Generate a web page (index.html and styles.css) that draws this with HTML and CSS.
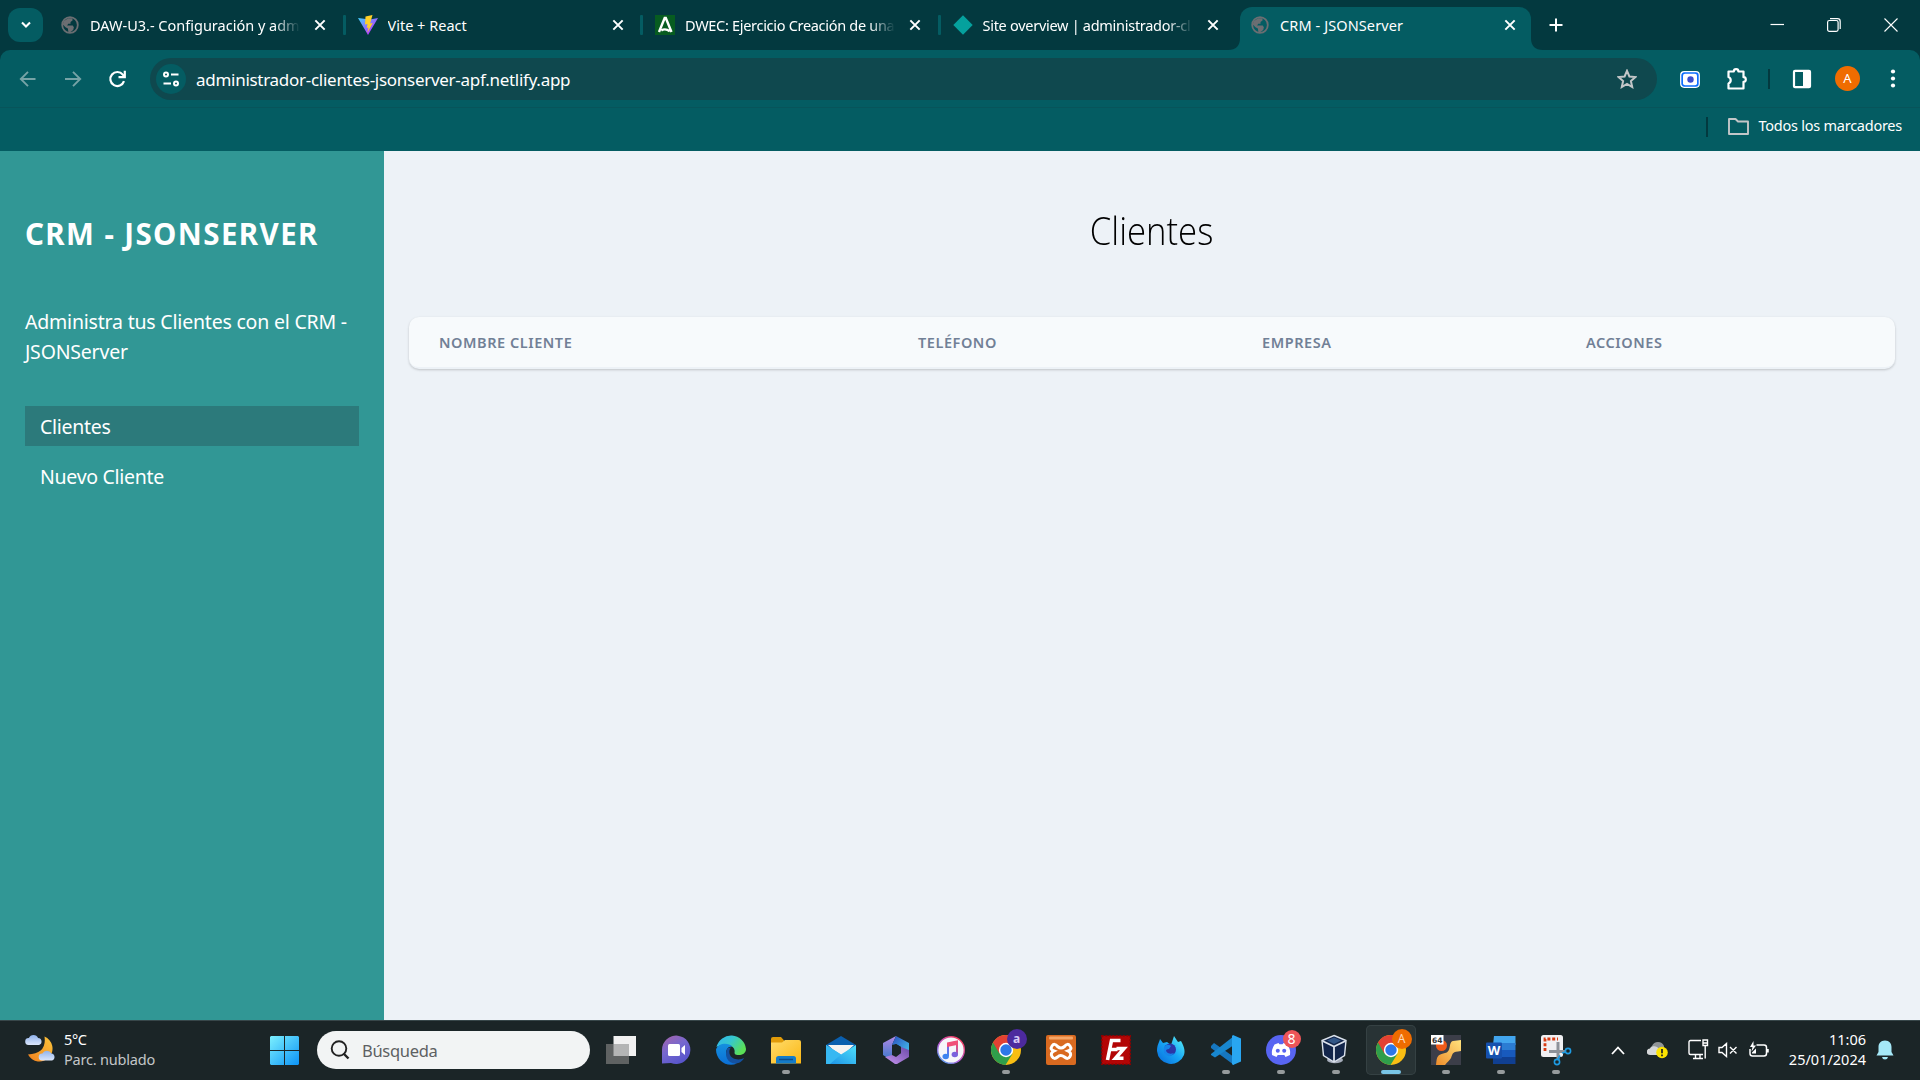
FILE: index.html
```html
<!DOCTYPE html>
<html lang="es">
<head>
<meta charset="utf-8">
<title>CRM - JSONServer</title>
<link rel="stylesheet" href="styles.css">
</head>
<body>
<svg width="0" height="0" class="defs">
  <defs>
    <linearGradient id="gWin" x1="0" y1="0" x2="1" y2="1"><stop offset="0" stop-color="#7cf0fe"/><stop offset="1" stop-color="#0c93f6"/></linearGradient>
    <linearGradient id="gVite" x1="0" y1="0" x2="1" y2="1"><stop offset="0" stop-color="#41d1ff"/><stop offset=".8" stop-color="#bd34fe"/></linearGradient>
    <linearGradient id="gMoon" x1="1" y1="0" x2="0" y2="1"><stop offset="0" stop-color="#fbc53b"/><stop offset="1" stop-color="#f0801f"/></linearGradient>
    <linearGradient id="gCloud" x1="0" y1="0" x2="0" y2="1"><stop offset="0" stop-color="#8fb2ec"/><stop offset="1" stop-color="#dbe6fb"/></linearGradient>
    <linearGradient id="gTeams" x1="0" y1="0" x2=".6" y2="1"><stop offset="0" stop-color="#a863a8"/><stop offset=".5" stop-color="#7668cf"/><stop offset="1" stop-color="#5855cc"/></linearGradient>
    <linearGradient id="gEdge" x1="0" y1="0" x2="1" y2=".5"><stop offset="0" stop-color="#2fb5ee"/><stop offset=".5" stop-color="#36c7cf"/><stop offset="1" stop-color="#5be057"/></linearGradient>
    <linearGradient id="gEdge2" x1="0" y1="0" x2="0" y2="1"><stop offset="0" stop-color="#1590df"/><stop offset="1" stop-color="#0b6fd6"/></linearGradient>
    <linearGradient id="gFolder" x1="0" y1="0" x2="1" y2="1"><stop offset="0" stop-color="#ffdc6b"/><stop offset="1" stop-color="#fbb714"/></linearGradient>
    <linearGradient id="gMail" x1="1" y1="0" x2="0" y2="1"><stop offset="0" stop-color="#4fe0fb"/><stop offset="1" stop-color="#1b8fe4"/></linearGradient>
    <linearGradient id="gM1" x1="0" y1="0" x2="0" y2="1"><stop offset="0" stop-color="#b489e6"/><stop offset="1" stop-color="#3d78cc"/></linearGradient>
    <linearGradient id="gM2" x1="0" y1="0" x2="1" y2="1"><stop offset="0" stop-color="#2b4ec0"/><stop offset="1" stop-color="#46c9ee"/></linearGradient>
    <linearGradient id="gM3" x1="0" y1="1" x2="1" y2="0"><stop offset="0" stop-color="#c795ef"/><stop offset="1" stop-color="#6c4aa9"/></linearGradient>
    <linearGradient id="gNote" x1="0" y1="1" x2="1" y2="0"><stop offset="0" stop-color="#3f86f2"/><stop offset=".4" stop-color="#8662dc"/><stop offset="1" stop-color="#fb4a67"/></linearGradient>
    <linearGradient id="gRing" x1="0" y1="1" x2=".8" y2="0"><stop offset="0" stop-color="#42b8f8"/><stop offset=".45" stop-color="#b35bd8"/><stop offset="1" stop-color="#fb3c58"/></linearGradient>
    <linearGradient id="gFox" x1="1" y1="0" x2="0" y2="1"><stop offset="0" stop-color="#5ff4f5"/><stop offset=".5" stop-color="#17a5f5"/><stop offset="1" stop-color="#0867d8"/></linearGradient>
    <linearGradient id="gXyz" x1="1" y1="0" x2="0" y2="1"><stop offset="0" stop-color="#ffe37e"/><stop offset="1" stop-color="#ee8c2a"/></linearGradient>
    <symbol id="globe" viewBox="0 0 18 18"><circle cx="9" cy="9" r="7.800" fill="none" stroke="#6b6e72" stroke-width="1.800"/><path d="M3 5l4-2.800h4.500v2.300L9.500 6v1.700H7.200L6.200 9.500h5.500l1.200 1.800-.7 2.600-3.400 2.700-1.500-.8-.4-3.300-2.400-1.300L1.600 8.200z" fill="#6b6e72"/></symbol>
    <symbol id="x" viewBox="0 0 12 12"><path d="M2 2l8 8M10 2l-8 8" stroke="#fff" stroke-width="1.700" fill="none"/></symbol>
    <symbol id="chrome" viewBox="0 0 30 30"><circle cx="15" cy="15" r="15" fill="#f9be13"/><path d="M15 15L2 7.500A15 15 0 0 0 14.500 30L21.500 18.700z" fill="#2f9e4b"/><path d="M15 15v-7h13.200A15 15 0 0 0 2 7.500l6.400 11z" fill="#e34133"/><circle cx="15" cy="15" r="7.200" fill="#fff"/><circle cx="15" cy="15" r="5.700" fill="#2d77e8"/></symbol>
  </defs>
</svg>

<header class="tabstrip">
  <button class="tab-search"><svg width="14" height="10" viewBox="0 0 14 10"><path d="M3 2.500l4 4 4-4" fill="none" stroke="#fff" stroke-width="2.100"/></svg></button>
  <nav class="tabs">
    <div class="tab"><svg class="fav" viewBox="0 0 18 18"><use href="#globe"/></svg><span class="tab-title t1">DAW-U3.- Configuración y adm</span><svg class="tab-x"><use href="#x"/></svg></div>
    <div class="tab"><svg class="fav" viewBox="0 0 20 20"><path d="M0 3l10 17L20 3l-8 1.500z" fill="url(#gVite)"/><path d="M14.500 0L7.500 1.400l-.5 8 2.500-.5-.7 4 1.700-.5-1.200 5.600 5.400-10-2.600.5z" fill="#ffd028"/></svg><span class="tab-title t2">Vite + React</span><svg class="tab-x"><use href="#x"/></svg></div>
    <div class="tab"><svg class="fav" viewBox="0 0 20 20"><path d="M0 0h20v20H0z" fill="#075c20"/><path d="M4 17L9.700 3h1.100L16.500 17M6.300 15.500q4-2.600 8.500.8" fill="none" stroke="#fff" stroke-width="2.400"/></svg><span class="tab-title t3">DWEC: Ejercicio Creación de una</span><svg class="tab-x"><use href="#x"/></svg></div>
    <div class="tab"><svg class="fav" viewBox="0 0 20 20"><path d="M10 .3l9.700 9.700L10 19.700.3 10z" fill="#05a19d"/></svg><span class="tab-title t4">Site overview | administrador-cl</span><svg class="tab-x"><use href="#x"/></svg></div>
    <div class="tab active"><svg class="fav" viewBox="0 0 18 18"><use href="#globe"/></svg><span class="tab-title t5">CRM - JSONServer</span><svg class="tab-x"><use href="#x"/></svg><svg class="flare left" viewBox="0 0 12 12"><path d="M12 0v12H0Q12 12 12 0z" fill="#045c62"/></svg><svg class="flare right" viewBox="0 0 12 12"><path d="M0 0v12h12Q0 12 0 0z" fill="#045c62"/></svg></div>
  </nav>
  <svg class="new-tab" viewBox="0 0 14 14"><path d="M7 .5v13M.5 7h13" stroke="#fff" stroke-width="2"/></svg>
  <div class="win-controls">
    <svg viewBox="0 0 14 14"><path d="M.5 6.500h13.500" stroke="#fff" stroke-width="1.200"/></svg>
    <svg viewBox="0 0 14 14"><rect x=".6" y="2.500" width="10.500" height="10.800" rx="1.800" fill="none" stroke="#fff" stroke-width="1.200"/><path d="M3 .7h7.500q2.700 0 2.700 2.700V11" fill="none" stroke="#fff" stroke-width="1.200"/></svg>
    <svg viewBox="0 0 14 14"><path d="M.5 .5l13 13M13.500 .5l-13 13" stroke="#fff" stroke-width="1.100"/></svg>
  </div>
</header>

<section class="toolbar-wrap"><div class="toolbar">
  <div class="nav-icons">
    <svg viewBox="0 0 20 20"><path d="M17.500 10H3M10 2.800L2.800 10l7.200 7.200" fill="none" stroke="#76a3a6" stroke-width="1.900"/></svg>
    <svg viewBox="0 0 20 20"><path d="M2 10h15M10 2.800l7.200 7.200-7.200 7.200" fill="none" stroke="#76a3a6" stroke-width="1.900"/></svg>
    <svg viewBox="0 0 20 20"><path d="M16 12.200A7 7 0 1 1 14.800 5.600L16.300 7.500" fill="none" stroke="#fff" stroke-width="2.200"/><path d="M16.800 1.800V8.200H10.500" fill="none" stroke="#fff" stroke-width="2.200"/></svg>
  </div>
  <div class="omnibox">
    <div class="site-chip"><svg width="16" height="16" viewBox="0 0 16 16" fill="none" stroke="#fff" stroke-width="2"><circle cx="3" cy="3.500" r="2"/><path d="M8 3.500h7.500M.5 12.500H8"/><circle cx="13" cy="12.500" r="2"/></svg></div>
    <span class="url">administrador-clientes-jsonserver-apf.netlify.app</span>
    <svg class="star" viewBox="0 0 20 20"><path d="M10 1.800l2.400 5.700 6 .5-4.500 4 1.300 6L10 14.900 4.800 18l1.300-6-4.500-4 6-.5z" fill="none" stroke="#c3c6c8" stroke-width="2"/></svg>
  </div>
  <div class="actions">
    <svg class="a1" width="20" height="17" viewBox="0 0 20 17"><rect x=".7" y=".7" width="18.600" height="15.600" rx="3.500" fill="#0d6efd" stroke="#fff" stroke-width="1.200"/><rect x="3" y="2.800" width="14" height="11.400" rx="2" fill="#fff"/><circle cx="10.500" cy="8.500" r="3.200" fill="#3b4ccc"/></svg>
    <svg class="a2" width="22" height="22" viewBox="0 0 22 22"><path d="M2.500 3.500h5.300a2.300 2.300 0 0 1 4.600 0H17.500v5.700a2.300 2.300 0 0 1 0 4.600V20.500H2.500v-5a3.500 3.500 0 0 0 0-6.500V3.500z" fill="none" stroke="#fff" stroke-width="2.200" stroke-linejoin="round"/></svg>
    <i class="divider"></i>
    <svg class="a3" width="20" height="20" viewBox="0 0 20 20"><rect x="2" y="1.800" width="16" height="16.400" rx="1" fill="none" stroke="#fff" stroke-width="2.200"/><path d="M11 2h7v16h-7z" fill="#fff"/></svg>
    <span class="avatar">A</span>
    <svg class="a4" width="6" height="20" viewBox="0 0 6 20" fill="#fff"><circle cx="3" cy="2.500" r="2.100"/><circle cx="3" cy="9.500" r="2.100"/><circle cx="3" cy="16.500" r="2.100"/></svg>
  </div>
</div></section>
<section class="bookmarks">
  <i class="divider"></i>
  <svg width="21" height="17" viewBox="0 0 21 17"><path d="M1 1h6.500l2.500 2.500h10V16H1z" fill="none" stroke="#c3c6c8" stroke-width="1.900" stroke-linejoin="round"/></svg>
  <span>Todos los marcadores</span>
</section>

<div class="page">
  <aside class="sidebar">
    <h2>CRM - JSONServer</h2>
    <p>Administra tus Clientes con el CRM -<br>JSONServer</p>
    <nav><a class="current">Clientes</a><a>Nuevo Cliente</a></nav>
  </aside>
  <main class="content">
    <h1><span>Clientes</span></h1>
    <div class="table">
      <div class="thead"><div>Nombre Cliente</div><div>Teléfono</div><div>Empresa</div><div>Acciones</div></div>
    </div>
  </main>
</div>

<footer class="taskbar">
  <div class="weather">
    <svg width="31" height="29" viewBox="0 0 31 29"><path d="M19.500 2.500A13 13 0 1 1 3 20.500Q22 19.500 19.500 2.500z" fill="url(#gMoon)"/><path d="M3.500 11a3.500 3.500 0 0 1 .4-7 5 5 0 0 1 9.200 0 3.600 3.600 0 0 1 1 7z" fill="url(#gCloud)"/><path d="M17 26.500a3.500 3.500 0 0 1 .4-7 5 5 0 0 1 9 0 3.600 3.600 0 0 1 .6 7z" fill="url(#gCloud)"/></svg>
    <div class="weather-text"><b>5°C</b><small>Parc. nublado</small></div>
  </div>
  <svg class="start" viewBox="0 0 29 29" fill="url(#gWin)"><path d="M1 0h13v14H0V1zM15 0h13l1 1v13H15zM0 15h14v14H1l-1-1zM15 15h14v13l-1 1H15z"/></svg>
  <div class="search"><svg width="20" height="20" viewBox="0 0 20 20" fill="none" stroke="#222" stroke-width="1.900"><circle cx="9" cy="8.500" r="7.300"/><path d="M13.500 13.500l5 5" stroke-width="2.400"/></svg><span>Búsqueda</span></div>
  <div class="apps">
    <div class="app"><svg viewBox="0 0 30 30"><path d="M7.500 1h22.500v20H7.500z" fill="#f1f1f1"/><path d="M0 9h23v20H0z" fill="#5f6262"/><path d="M7.500 9H23v12H7.500z" fill="#b4b5b5"/></svg></div>
    <div class="app"><svg viewBox="0 0 30 30"><path d="M1 28.500V15A14.200 14.200 0 1 1 10 28z" fill="url(#gTeams)"/><rect x="7" y="9" width="12" height="12" rx="1.500" fill="#fff"/><path d="M20.500 13l3.500-3v10l-3.500-3z" fill="#fff"/></svg></div>
    <div class="app"><svg viewBox="0 0 30 30"><path d="M.5 12A15 15 0 0 1 30 14C30 19 25 20.500 21.500 20 18 19.500 18.500 17.500 18.700 16Q18 11 13 10.500 5 9 .5 12z" fill="url(#gEdge)"/><path d="M0 14.500C2 8 12 7 16.500 11.500 11 11 9 16 11 21c2 4.500 6 7 10 7.500-10 4.500-21-3-21-14z" fill="url(#gEdge2)"/><path d="M11.500 13c-4 8 .5 15.500 8 15.500 4 0 7.500-3 8.500-5.500-4 2.500-13 2-14.500-4.500-.5-2.500 0-4.500 1.500-6z" fill="#1451a0"/></svg></div>
    <div class="app run"><svg viewBox="0 0 30 30"><path d="M0 4q0-2 2-2h8l3.500 4v4H0z" fill="#e09b09"/><path d="M0 7.500h11l3-2.500h14q2 0 2 2v21.500H0z" fill="url(#gFolder)"/><path d="M5 28.500v-5q0-2.500 2.500-2.500h15q2.500 0 2.500 2.500v5z" fill="#147cc9"/><path d="M8 24.500h14" stroke="#0c4d8c" stroke-width="1.500"/></svg></div>
    <div class="app"><svg viewBox="0 0 30 30"><path d="M0 10L15 1l15 9v5H0z" fill="#0a5fae"/><path d="M2 10h26L15 22z" fill="#f5f3f1"/><path d="M0 10l15 9.500L30 10v19H0z" fill="url(#gMail)"/><path d="M0 10l15 9.500L4 29H0z" fill="#37b8f2"/></svg></div>
    <div class="app"><svg viewBox="0 0 30 30"><path d="M15 1l-4 9v10l-2 4.500L2 20V8z" fill="url(#gM1)"/><path d="M11 10l4-9 13 7v13l-8-3.500V12l-5-3z" fill="url(#gM2)"/><path d="M28 15v7l-12 7H14L4 22l7-2 4 2 5-4V12z" fill="url(#gM3)"/><path d="M15 9l5 3v6l-5 3-4-2v-7z" fill="#1b2527"/></svg></div>
    <div class="app"><svg viewBox="0 0 30 30"><circle cx="15" cy="15" r="13.300" fill="#f6f6fa" stroke="url(#gRing)" stroke-width="1.400"/><path d="M12 21V9l9-2v12" fill="none" stroke="url(#gNote)" stroke-width="2"/><path d="M11 7.500l11-2.300v4.500L11 12z" fill="#f04f78"/><ellipse cx="9.700" cy="21.500" rx="3.200" ry="2.800" fill="#3e84f0"/><ellipse cx="18.800" cy="19.500" rx="3.200" ry="2.800" fill="#7a61dd"/></svg></div>
    <div class="app run"><svg viewBox="0 0 30 30"><use href="#chrome"/></svg><em class="badge purple">a</em></div>
    <div class="app"><svg viewBox="0 0 30 30"><rect width="30" height="30" rx="2" fill="#d96a20"/><rect x="3" y="1.500" width="24" height="3" rx="1" fill="#f5a567"/><path d="M11.500 11.500q-3-4-5.500-.5t2 5q-4 2-2 5.500t5.500.5q3-3 7 0 3.500 3 5.500-.5t-2-5.500q4.500-1.500 2-5t-5.500.5q-3.500 3-7 0z" fill="none" stroke="#fff" stroke-width="3"/></svg></div>
    <div class="app"><svg viewBox="0 0 30 30"><rect x=".8" y=".8" width="28.400" height="28.400" fill="#b30505" stroke="#8e0000" stroke-width="1.500" stroke-dasharray="2 1.500"/><path d="M6.500 25l4-19.500h9M8.500 14.500h8M15.500 13.500h7.500l-8.500 9.800h8" fill="none" stroke="#fff" stroke-width="3.600"/></svg></div>
    <div class="app"><svg viewBox="0 0 30 30"><path d="M1 16C1 10 3 8 4 4l3 4 4-1 4 3 3-9 4 6 3-1c4 7 4 11 3 14A14 14 0 0 1 1 16z" fill="url(#gFox)"/><circle cx="14" cy="14.500" r="6" fill="#2c35a5"/><path d="M8 12q3-4 7-1l-2 3q-3 0-3 2 2 4 8 2-3 5-8 2-3-2-2-8z" fill="#1784ea"/></svg></div>
    <div class="app run"><svg viewBox="0 0 30 30"><path d="M0 11l3-3 20 14v8L0 13z" fill="#1677c0"/><path d="M0 19L23 1v9L4 22.500 0 20z" fill="#1887cf"/><path d="M22 0l8 3.500v23L22 30l-1-1V1z" fill="#29a6f1"/></svg></div>
    <div class="app run"><svg viewBox="0 0 30 30"><circle cx="15" cy="15" r="15" fill="#5865f2"/><path d="M8.500 9.500l4-1.500 1 1.200h3l1-1.200 4 1.500Q25 15 24 20l-4.500 2-1.200-2h-6.600l-1.200 2L6 20q-1-5 2.500-10.500z" fill="#fff"/><circle cx="11.800" cy="15.800" r="2" fill="#5865f2"/><circle cx="18.200" cy="15.800" r="2" fill="#5865f2"/></svg><em class="badge red">8</em></div>
    <div class="app run"><svg viewBox="2 0 30 30"><ellipse cx="16" cy="25" rx="8" ry="3.300" fill="#a6adbb"/><path d="M15 .5l12 5-1.500 15L15 27 4.500 20.500 3 5.500z" fill="#12254a" stroke="#dbe2ec" stroke-width="1.400"/><path d="M3.500 6L15 11.500 26.500 6M15 11.500V27" stroke="#dbe2ec" stroke-width="1.800" fill="none"/><path d="M8 5.500l7-3 7 3-7 3.500z" fill="#315687"/></svg></div>
    <div class="app run focused"><svg viewBox="0 0 30 30"><use href="#chrome"/></svg><em class="badge orange">A</em></div>
    <div class="app run"><svg viewBox="0 0 30 30"><path d="M0 0h30v30H0z" fill="#3c3e49"/><circle cx="10.500" cy="10.500" r="5.500" fill="#f05a18"/><path d="M5 30c1-9 1-10 9-12C21 17 17 7 22 6l8-1v11c-9 1-8 2-10 7-1 2-4 4-6 7z" fill="url(#gXyz)"/><path d="M0 0h12.500v9.500H0z" fill="#fff"/><text x="1" y="7.600" class="ic64">64</text></svg></div>
    <div class="app run"><svg viewBox="0 0 30 30"><path d="M8 1h21.500v9H7z" fill="#42a5ee"/><path d="M7 8h22.500v7H7z" fill="#2b7cd3"/><path d="M7 15h22.500v7H7z" fill="#185abd"/><path d="M7 22h22.500v7H7z" fill="#103f91"/><rect y="7.500" width="16" height="16" rx="1" fill="#1651ae"/><text x="1.800" y="19.700" class="icw">W</text></svg></div>
    <div class="app run"><svg viewBox="0 0 30 30"><rect width="22" height="22" rx="2.500" fill="#f0f0f2"/><path d="M4 16V4h13" stroke="#d83b12" stroke-width="2.800" stroke-dasharray="3 1.800" fill="none"/><path d="M8 16.500h16M17 7v18" stroke="#8d9299" stroke-width="3"/><circle cx="27" cy="16" r="2.600" fill="none" stroke="#1e9be2" stroke-width="1.600"/><circle cx="16" cy="27" r="2.600" fill="none" stroke="#1e9be2" stroke-width="1.600"/><path d="M17 24l2-3.500M21 18l4-1" stroke="#1e9be2" stroke-width="1.800"/></svg></div>
  </div>
  <div class="tray">
    <svg class="up" width="14" height="9" viewBox="0 0 14 9"><path d="M1 8l6-6.500L13 8" fill="none" stroke="#fff" stroke-width="1.800"/></svg>
    <svg class="cloud" width="21" height="18" viewBox="0 0 21 18"><path d="M5 12a4 4 0 0 1 0-7 6.500 6.500 0 0 1 12 0v7z" fill="#909496"/><path d="M3 14a3.200 3.200 0 0 1 0-6.400 5 5 0 0 1 7-1.600l6 5-3 3z" fill="#d5d7d8"/><circle cx="15" cy="11.500" r="5.800" fill="#fde300"/><path d="M15 8v4.200M15 13.600v1.600" stroke="#222" stroke-width="1.700"/></svg>
    <svg class="net" width="21" height="21" viewBox="0 0 21 21" fill="none" stroke="#fff" stroke-width="1.400"><path d="M13 1.500H2.500q-1.500 0-1.500 1.500v11q0 1.500 1.500 1.500H15M5 19.500h10M7.500 16v3M12 16v3M15 1h4.500v5.500H15zM17.200 7v12.500M15 4h4"/></svg>
    <svg class="vol" width="20" height="16" viewBox="0 0 20 16" fill="none" stroke="#fff" stroke-width="1.400"><path d="M1 5.500h3L8.500 1.500v13L4 10.500H1zM12 5l6.500 6.500M18.500 5L12 11.500"/></svg>
    <svg class="bat" width="21" height="17" viewBox="0 0 21 17" fill="none" stroke="#fff" stroke-width="1.500"><path d="M7.500 4H15q2.500 0 2.500 2.500v6q0 2.500-2.500 2.500H3.500Q1 15 1 12.500V8M19 8v3.500"/><path d="M4.500 0L1 6h2.500L2.500 10.500 7 4.500H4.500z" fill="#fff" stroke="none"/><path d="M3 11.500l4-4v5H3z" fill="#fff" stroke="none"/></svg>
    <div class="clock"><span>11:06</span><span>25/01/2024</span></div>
    <svg class="bell" width="18" height="20" viewBox="0 0 18 20"><path d="M9 .5c4.500 0 6.500 3 6.500 6.500v5l2 3.500H.5l2-3.500V7C2.500 3.500 4.500.5 9 .5zM6 17h6q-.5 2.500-3 2.500T6 17z" fill="#a5e8f7"/></svg>
  </div>
</footer>
</body>
</html>
```
FILE: styles.css
```css
* { box-sizing: border-box; }
body { margin: 0; width: 1920px; height: 1080px; overflow: hidden; display: flex; flex-direction: column; font-family: "Noto Sans", "Open Sans", sans-serif; color: #fff; }
svg { display: block; flex: none; }
.defs { position: absolute; }

.tabstrip { height: 50px; background: #03393f; display: flex; align-items: center; flex: none; padding-left: 8px; }
.tab-search { width: 35px; height: 34px; border: 0; border-radius: 12px; background: #045c62; display: grid; place-items: center; padding: 0; }
.tabs { display: flex; margin-left: 7px; align-self: stretch; }
.tab { width: 297.500px; display: flex; align-items: center; padding-left: 10px; position: relative; }
.tab:nth-child(-n+3)::after { content: ""; width: 3px; height: 20px; background: #045c62; position: absolute; right: 2px; top: 15px; border-radius: 1px; }
.fav { width: 20px; height: 20px; }
.tab:nth-child(1) .fav, .tab.active .fav { width: 18px; height: 18px; margin: 0 1px; }
.tab-title { margin-left: 10px; width: 210px; font-size: 14.500px; white-space: nowrap; overflow: hidden; }
.t1, .t3, .t4 { -webkit-mask-image: linear-gradient(90deg, #000 184px, transparent 210px); mask-image: linear-gradient(90deg, #000 184px, transparent 210px); }
.t3 { letter-spacing: -.3px; }
.t4 { letter-spacing: -.28px; }
.t5 { letter-spacing: .1px; }
.tab-x { width: 14px; height: 14px; margin-left: 13px; }
.tab.active { z-index: 0; }
.tab.active::before { content: ""; position: absolute; left: 0; right: 7px; bottom: 0; top: 7px; background: #045c62; border-radius: 12px 12px 0 0; z-index: -1; }
.flare { position: absolute; width: 12px; height: 12px; bottom: 0; }
.flare.left { left: -12px; }
.flare.right { right: -5px; }
.new-tab { width: 14px; height: 14px; margin-left: 11px; }
.win-controls { margin-left: auto; display: flex; gap: 43px; padding-right: 22px; }
.win-controls svg { width: 14px; height: 14px; }

.toolbar-wrap { background: #03393f; flex: none; }
.toolbar { height: 57px; background: #045c62; border-radius: 10px 10px 0 0; display: flex; align-items: center; padding: 1px 0 0 18px; }
.nav-icons { display: flex; gap: 25px; width: 132px; }
.nav-icons svg { width: 20px; height: 20px; }
.omnibox { width: 1507px; height: 42px; border-radius: 21px; background: #0f484e; display: flex; align-items: center; padding: 0 20px 0 6px; }
.site-chip { width: 30px; height: 30px; border-radius: 50%; background: #045c62; display: grid; place-items: center; }
.url { margin-left: 10px; font-size: 17px; letter-spacing: -.28px; }
.star { width: 20px; height: 20px; margin-left: auto; }
.actions { display: flex; align-items: center; flex: 1; padding-left: 23px; }
.a2 { margin-left: 26px; margin-top: -1px; }
.divider { width: 2px; height: 20px; background: #03393f; }
.actions .divider { margin: 0 22px 0 20px; }
.avatar { width: 25px; height: 25px; border-radius: 50%; background: #ef6c00; display: grid; place-items: center; font-size: 13px; margin: -2px 30px 0 23px; }
.bookmarks { height: 44px; background: #045c62; border-top: 1px solid #07545a; display: flex; align-items: center; justify-content: flex-end; padding: 0 18px 6px 0; font-size: 14.500px; letter-spacing: -.25px; flex: none; }
.bookmarks svg { margin: -1px 10px 0 20px; }
.bookmarks span { margin-top: -3px; }

.page { flex: 1; display: flex; min-height: 0; }
.sidebar { width: 384px; background: #319795; padding: 60px 25px; }
.sidebar h2 { margin: 0; font-size: 29.500px; line-height: 45px; text-transform: uppercase; font-weight: 700; letter-spacing: 1.400px; white-space: nowrap; }
.sidebar p { margin: 51px 0 0; font-size: 19.500px; line-height: 30px; white-space: nowrap; letter-spacing: -.2px; }
.sidebar nav { margin-top: 39px; display: grid; gap: 10px; }
.sidebar a { height: 40px; line-height: 42px; padding-left: 15px; font-size: 19.500px; letter-spacing: -.28px; }
.current { background: #2c7a7b; }
.content { flex: 1; background: #edf2f7; padding: 50px 25px; }
.content h1 { margin: 0; text-align: center; color: #000; font-family: "Open Sans", "Noto Sans", sans-serif; font-weight: 300; font-size: 38.500px; line-height: 58px; }
.content h1 span { display: inline-block; transform: scaleX(.9); }
.table { margin-top: 58px; height: 52px; border-radius: 10px; background: #f7fafc; border-bottom: 2px solid #edf2f7; box-shadow: 0 1px 3px rgba(0,0,0,.12), 0 1px 2px rgba(0,0,0,.08); }
.thead { display: grid; grid-template-columns: 479px 344px 324px 1fr; height: 50px; line-height: 50px; color: #718096; font-size: 14.500px; font-weight: 600; letter-spacing: .55px; text-transform: uppercase; }
.thead div { padding-left: 30px; }

.taskbar { height: 60px; background: #1b2527; border-top: 1px solid #38474a; display: flex; align-items: center; flex: none; padding-bottom: 1px; }
.weather { display: flex; align-items: center; gap: 8px; width: 246px; padding-left: 25px; }
.weather > svg { margin-top: -4px; }
.weather-text { display: flex; flex-direction: column; line-height: 20px; font-size: 14.500px; margin-top: -2px; }
.weather-text b { font-weight: 400; letter-spacing: -.4px; }
.weather-text small { font-size: 14.500px; color: #c3c6c7; letter-spacing: -.2px; }
.start { width: 29px; height: 29px; margin-left: 24px; }
.search { width: 273px; height: 38px; border-radius: 19px; background: #f2f4f4; margin-left: 18px; display: flex; align-items: center; padding-left: 13px; color: #5d6062; font-size: 16.500px; letter-spacing: -.3px; }
.search span { margin-left: 12px; }
.apps { display: flex; margin-left: 3px; }
.app { width: 50px; height: 50px; margin: 0 2.500px; display: grid; place-items: center; position: relative; border-radius: 5px; }
.app > svg { width: 30px; height: 30px; overflow: visible; }
.run::after { content: ""; position: absolute; left: 21px; top: 45px; width: 8px; height: 4px; border-radius: 2px; background: #969b9c; }
.focused { background: #283335; box-shadow: inset 0 0 0 1px #354143; }
.focused::after { left: 15px; width: 20px; background: #79c5e6; }
.badge { position: absolute; width: 20px; height: 20px; border-radius: 50%; left: 26px; top: 4px; font-style: normal; font-size: 12px; line-height: 19px; text-align: center; }
.purple { background: #4d2a9e; color: #d7c9f5; font-weight: 700; }
.red { background: #ed5558; font-size: 14px; width: 18px; height: 18px; line-height: 18px; left: 27px; top: 5px; }
.orange { background: #ef6c00; color: #ffd9ba; }
.ic64 { font: 700 7.500px "DejaVu Sans", sans-serif; fill: #333; }
.icw { font: 700 13px "Open Sans", sans-serif; fill: #fff; }
.tray { display: flex; align-items: center; margin-left: auto; padding-right: 26px; }
.cloud { margin-left: 22px; }
.net { margin-left: 20px; margin-top: -1px; }
.vol { margin-left: 9px; }
.bat { margin-left: 11px; margin-top: -2px; }
.clock { width: 96px; display: flex; flex-direction: column; text-align: right; line-height: 20px; font-size: 14.500px; margin-top: -2px; }
.bell { margin-left: 10px; }
```
